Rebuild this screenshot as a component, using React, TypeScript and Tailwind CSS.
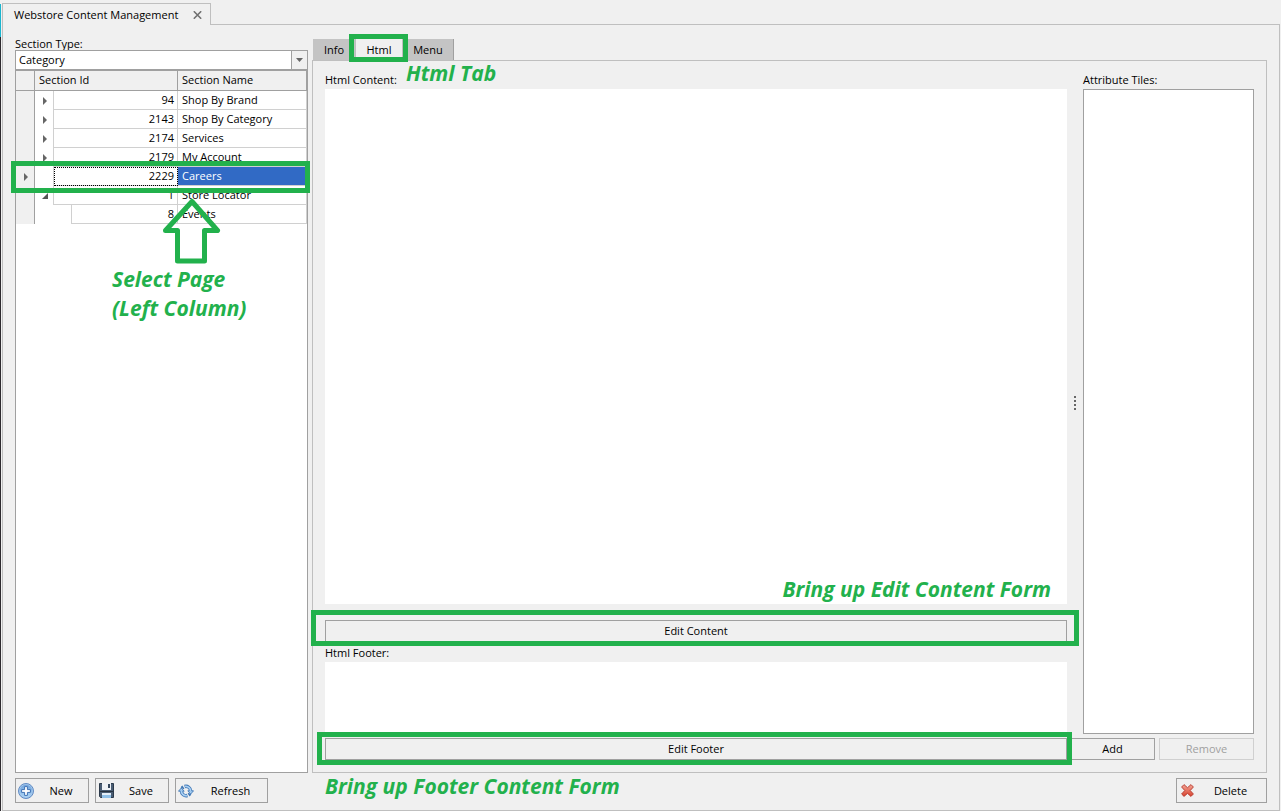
import { useState } from "react";
import type { ReactNode } from "react";
import clsx from "clsx";

const SECTIONS = [
  { id: 94, name: "Shop By Brand", state: "closed" },
  { id: 2143, name: "Shop By Category", state: "closed" },
  { id: 2174, name: "Services", state: "closed" },
  { id: 2179, name: "My Account", state: "closed" },
  { id: 2229, name: "Careers", state: "leaf" },
  { id: 1, name: "Store Locator", state: "open" },
  { id: 8, name: "Events", state: "child" },
];

const TABS = [
  { name: "Info", width: "w-[42px]" },
  { name: "Html", width: "w-12" },
  { name: "Menu", width: "w-[51px]" },
];

function Arrow() {
  return (
    <svg width="5" height="8" viewBox="0 0 5 8" className="ml-[7px] block" aria-hidden="true">
      <path d="M1 0L5 4L1 8Z" fill="#666" />
    </svg>
  );
}

function OpenArrow() {
  return (
    <svg width="6" height="6" viewBox="0 0 6 6" className="ml-[7px] block" aria-hidden="true">
      <path d="M6 0V6H0Z" fill="#555" />
    </svg>
  );
}

function NewIcon() {
  return (
    <svg width="16" height="16" viewBox="0 0 16 16" aria-hidden="true">
      <defs>
        <linearGradient id="new-fill" x1="0" y1="0" x2="0" y2="1">
          <stop offset="0" stopColor="#6fa3dc" />
          <stop offset="1" stopColor="#a9d3f5" />
        </linearGradient>
      </defs>
      <circle cx="8" cy="8" r="7.5" fill="#a9c9ec" stroke="#5f8bc4" strokeWidth="1" />
      <circle cx="8" cy="8" r="6.2" fill="url(#new-fill)" />
      <path d="M6.6 3.6h2.8v3h3v2.8h-3v3h-2.8v-3h-3v-2.8h3z" fill="#fff" stroke="#3f72b5" strokeWidth="1" />
    </svg>
  );
}

function SaveIcon() {
  return (
    <svg width="15" height="15" viewBox="0 0 15 15" aria-hidden="true">
      <path d="M0.5 0.5H14.5V14.5H1.5L0.5 13.5Z" fill="#4a5d74" stroke="#2c3a4b" />
      <rect x="3" y="0" width="9" height="7" fill="#eef1f5" />
      <rect x="9" y="1" width="2" height="4" fill="#33465c" />
      <rect x="1" y="8" width="13" height="1" fill="#26323f" />
      <rect x="3" y="10" width="9" height="5" fill="#8fc0e8" />
      <rect x="3" y="10" width="9" height="2" fill="#e4eff9" />
    </svg>
  );
}

function RefreshIcon() {
  return (
    <svg width="16" height="14" viewBox="0 0 16 14" className="shrink-0" aria-hidden="true">
      <g fill="none" stroke="#4178b6" strokeWidth="3.4">
        <path d="M3.4 7A4.7 4.7 0 0 0 9.4 11.5" />
        <path d="M12.6 7A4.7 4.7 0 0 0 6.6 2.5" />
        <path d="M11.9 9.6A4.7 4.7 0 0 1 10.6 11" />
        <path d="M4.1 4.4A4.7 4.7 0 0 1 5.4 3" />
      </g>
      <g fill="#a9d0f3" stroke="#4178b6" strokeWidth="0.9" strokeLinejoin="round">
        <path d="M0.5 7.2L3.3 4L6.2 7.2Z" />
        <path d="M15.5 6.8L12.7 10L9.8 6.8Z" />
      </g>
      <g fill="none" stroke="#a9d0f3" strokeWidth="1.7">
        <path d="M3.4 6.4A4.7 4.7 0 0 0 9 11.6" />
        <path d="M12.6 7.6A4.7 4.7 0 0 0 7 2.4" />
      </g>
    </svg>
  );
}

function DeleteIcon() {
  return (
    <svg width="13" height="13" viewBox="0 0 13 13" aria-hidden="true">
      <defs>
        <linearGradient id="delete-fill" x1="0" y1="0" x2="0" y2="1">
          <stop offset="0" stopColor="#f3a596" />
          <stop offset="1" stopColor="#d8432f" />
        </linearGradient>
      </defs>
      <path
        d="M3 0.6L6.5 3.7L10 0.6L12.4 3L9.2 6.5L12.4 10L10 12.4L6.5 9.4L3 12.4L0.6 10L3.8 6.5L0.6 3Z"
        fill="url(#delete-fill)"
        stroke="#b5392c"
        strokeWidth="0.9"
        strokeLinejoin="round"
      />
    </svg>
  );
}

function IconButton({ icon, label, className }: { icon: ReactNode; label: string; className: string }) {
  return (
    <button type="button" className={clsx("flex h-[25px] items-center border border-[#a0a0a0] pl-0.5", className)}>
      <span className="flex w-4 shrink-0 justify-center">{icon}</span>
      <span className="flex-1 text-center">{label}</span>
    </button>
  );
}

function Note({ children, className }: { children: ReactNode; className: string }) {
  return (
    <p
      className={clsx(
        "pointer-events-none absolute z-20 font-['Open_Sans',sans-serif] text-[21px] leading-[29px] font-bold whitespace-nowrap text-[#22b14c] italic",
        className
      )}
    >
      {children}
    </p>
  );
}

function Highlight({ className }: { className: string }) {
  return <span className={clsx("pointer-events-none absolute z-10 border-[5px] border-[#22b14c]", className)} />;
}

function SectionGrid() {
  const [selected, setSelected] = useState(2229);

  return (
    <table className="w-full table-fixed border-separate border-spacing-0">
      <colgroup>
        <col className="w-[19px]" />
        <col className="w-[19px]" />
        <col className="w-[18px]" />
        <col />
        <col className="w-[129px]" />
      </colgroup>
      <thead>
        <tr className="h-5 bg-[#f0f0f0] text-left align-top leading-[18px]">
          <th className="border-r border-b border-[#a0a0a0] p-0" />
          <th colSpan={3} className="border-r border-b border-[#a0a0a0] p-0 pl-1 font-normal">
            Section Id
          </th>
          <th className="border-r border-b border-[#a0a0a0] p-0 pl-1 font-normal">Section Name</th>
        </tr>
      </thead>
      <tbody>
        {SECTIONS.map(({ id, name, state }) => {
          const active = id === selected;
          return (
            <tr key={id} className="relative h-[19px]" onClick={() => setSelected(id)}>
              <td className="border-r border-[#a0a0a0] bg-[#f0f0f0] p-0">
                {active && <Arrow />}
                {active && <Highlight className="-top-1.5 -right-[3px] -bottom-[7px] -left-[5px]" />}
              </td>
              <td colSpan={state === "child" ? 2 : 1} className="border-r border-[#d0d0d0] p-0">
                {state === "closed" && <Arrow />}
                {state === "open" && <OpenArrow />}
              </td>
              <td
                colSpan={state === "child" ? 1 : 2}
                className={clsx(
                  "border-r border-b border-[#d0d0d0] p-0 pr-[3px] text-right",
                  active && "outline outline-dotted -outline-offset-1 outline-black"
                )}
              >
                {id}
              </td>
              <td
                className={clsx(
                  "border-r border-b border-[#d0d0d0] p-0 pl-1",
                  active && "bg-[#316ac5] text-white"
                )}
              >
                {name}
              </td>
            </tr>
          );
        })}
      </tbody>
    </table>
  );
}

function SectionPanel() {
  return (
    <aside className="flex w-[293px] shrink-0 flex-col pt-[9px]">
      <label htmlFor="section-type" className="h-4 leading-5">
        Section Type:
      </label>
      <div className="flex h-5 border border-[#a0a0a0] bg-white">
        <select id="section-type" defaultValue="Category" className="min-w-0 flex-1 appearance-none bg-white pl-[3px] outline-none">
          <option>Category</option>
          <option>Page</option>
        </select>
        <span className="pointer-events-none flex w-4 items-center justify-center border-l border-[#a0a0a0] bg-[#f0f0f0]">
          <svg width="7" height="4" viewBox="0 0 7 4" aria-hidden="true">
            <path d="M0 0H7L3.5 4Z" fill="#666" />
          </svg>
        </span>
      </div>
      <div className="relative flex-1 border border-[#a0a0a0] bg-white">
        <SectionGrid />
        <svg
          width="60"
          height="68"
          viewBox="162 197 60 68"
          className="pointer-events-none absolute top-[126px] left-[146px] z-20"
          aria-hidden="true"
        >
          <path
            d="M192 201.5L217.5 230.5H204.5V261H177.5V230.5H165.5Z"
            fill="none"
            stroke="#22b14c"
            strokeWidth="5"
            strokeLinejoin="round"
          />
        </svg>
        <Note className="top-[194px] left-24">
          Select Page
          <br />
          (Left Column)
        </Note>
      </div>
    </aside>
  );
}

function HtmlEditors() {
  return (
    <div className="flex min-w-0 flex-1 flex-col">
      <label htmlFor="html-content" className="h-5 leading-[22px]">
        Html Content:
      </label>
      <div className="relative flex flex-1">
        <textarea id="html-content" className="block w-full resize-none bg-white outline-none" />
        <Note className="right-4 bottom-0">Bring up Edit Content Form</Note>
      </div>
      <div className="relative mt-4 flex">
        <button type="button" className="h-[22px] flex-1 border border-[#a0a0a0]">
          Edit Content
        </button>
        <Highlight className="-top-2.5 -right-3 -bottom-1 -left-3.5" />
      </div>
      <label htmlFor="html-footer" className="h-5 leading-[22px]">
        Html Footer:
      </label>
      <textarea id="html-footer" className="block h-[71px] resize-none bg-white outline-none" />
      <div className="relative mt-[5px] flex">
        <button type="button" className="h-[22px] flex-1 border border-[#a0a0a0]">
          Edit Footer
        </button>
        <Highlight className="-top-1.5 -right-[5px] -bottom-[5px] -left-2" />
      </div>
    </div>
  );
}

function AttributeTiles() {
  return (
    <div className="flex w-[171px] shrink-0 flex-col">
      <label htmlFor="attribute-tiles" className="h-5 leading-[22px]">
        Attribute Tiles:
      </label>
      <textarea
        id="attribute-tiles"
        readOnly
        className="block flex-1 resize-none border border-[#a0a0a0] bg-white outline-none"
      />
      <div className="mt-1 flex justify-end gap-1">
        <button type="button" className="h-[22px] w-[85px] shrink-0 border border-[#a0a0a0]">
          Add
        </button>
        <button type="button" disabled className="h-[22px] w-[95px] shrink-0 border border-[#d0d0d0] text-[#a0a0a0]">
          Remove
        </button>
      </div>
    </div>
  );
}

function Details() {
  const [tab, setTab] = useState("Html");

  return (
    <section className="flex min-w-0 flex-1 flex-col pt-3.5">
      <div role="tablist" className="relative flex h-[21px] pl-px">
        {TABS.map(({ name, width }) => (
          <button
            key={name}
            type="button"
            role="tab"
            aria-selected={tab === name}
            onClick={() => setTab(name)}
            className={clsx(
              width,
              tab === name ? "border-x border-[#bfbfbf] bg-[#f0f0f0]" : "bg-[#c4c4c4]",
              tab !== name && "last-of-type:border-r last-of-type:border-[#a0a0a0]"
            )}
          >
            {name}
          </button>
        ))}
        <Highlight className="-top-[5px] left-[37px] h-7 w-[59px]" />
        <Note className="top-5 left-[94px]">Html Tab</Note>
      </div>
      <div className="relative flex flex-1 border border-[#bfbfbf] px-3 pt-2 pb-3">
        <HtmlEditors />
        <div className="flex w-4 shrink-0 flex-col items-center justify-center gap-0.5 pb-6">
          <span className="size-0.5 bg-[#666]" />
          <span className="size-0.5 bg-[#666]" />
          <span className="size-0.5 bg-[#666]" />
          <span className="size-0.5 bg-[#666]" />
        </div>
        <AttributeTiles />
        <Note className="top-full left-3">Bring up Footer Content Form</Note>
      </div>
    </section>
  );
}

export default function App() {
  return (
    <div className="flex min-h-screen bg-[#f0f0f0] pr-px font-['Open_Sans',sans-serif] text-[11px] leading-4 text-black">
      {/* Edge of the application sidebar */}
      <div className="flex w-px shrink-0 flex-col pt-1">
        <div className="h-[33px] bg-[#1ab5cf]" />
        <div className="flex-1 bg-[#2d2a2e]" />
      </div>

      <div className="flex min-w-0 flex-1 flex-col pt-[3px] pl-px">
        <div className="flex h-[22px]">
          <div className="flex w-[209px] items-center justify-between border-t border-r border-l border-[#bfbfbf] pr-2 pl-[11px]">
            <span>Webstore Content Management</span>
            <button type="button" aria-label="Close tab">
              <svg width="9" height="8" viewBox="0 0 9 8" aria-hidden="true">
                <path d="M0.8 0.3L8.2 7.7M8.2 0.3L0.8 7.7" stroke="#707070" strokeWidth="1.6" />
              </svg>
            </button>
          </div>
          <div className="flex-1 border-b border-[#bfbfbf]" />
        </div>

        <main className="flex flex-1 flex-col border-r border-b border-l border-[#bfbfbf] px-3 pb-[7px]">
          <div className="flex flex-1 gap-1">
            <SectionPanel />
            <Details />
          </div>
          <div className="mt-[5px] flex gap-1.5">
            <IconButton icon={<NewIcon />} label="New" className="w-[74px]" />
            <IconButton icon={<SaveIcon />} label="Save" className="w-[74px]" />
            <IconButton icon={<RefreshIcon />} label="Refresh" className="w-[93px]" />
            <IconButton icon={<DeleteIcon />} label="Delete" className="ml-auto w-[91px]" />
          </div>
        </main>
      </div>
    </div>
  );
}
